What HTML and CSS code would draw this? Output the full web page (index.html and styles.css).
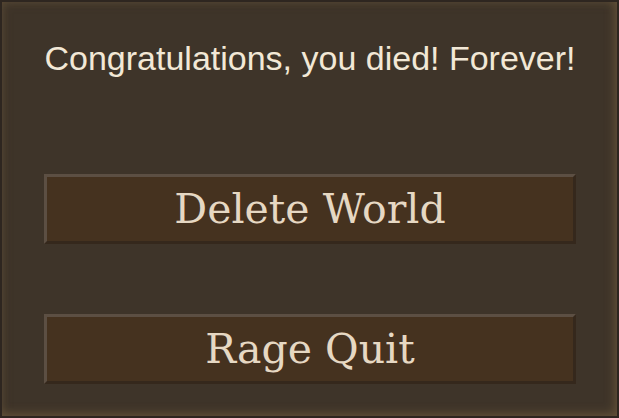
FILE: index.html
```html
<!DOCTYPE html>
<html>
<head>
<meta charset="utf-8">
<link rel="stylesheet" href="styles.css">
</head>
<body>
<div class="panel">
  <h1 class="title">Congratulations, you died! Forever!</h1>
  <div class="buttons">
    <button class="btn">Delete World</button>
    <button class="btn">Rage Quit</button>
  </div>
</div>
</body>
</html>
```
FILE: styles.css
```css
html, body {
  margin: 0;
  padding: 0;
  width: 619px;
  height: 418px;
  background: #2f2822;
  overflow: hidden;
}
.panel {
  box-sizing: border-box;
  width: 619px;
  height: 418px;
  border: 2px solid #2e2620;
  background: #3e3429;
  box-shadow: inset -3px -3px 10px rgba(120, 98, 66, 0.55), inset 2px 2px 8px rgba(100, 82, 60, 0.35);
  display: flex;
  flex-direction: column;
  align-items: center;
  padding: 0 41px 0 42px;
}
.title {
  margin: 36px 0 0;
  font-family: "Liberation Sans", Arial, sans-serif;
  font-weight: normal;
  font-size: 34px;
  line-height: 40px;
  color: #f2e8d6;
  white-space: nowrap;
}
.buttons {
  display: flex;
  flex-direction: column;
  gap: 70px;
  margin-top: 96px;
  width: 100%;
}
.btn {
  box-sizing: border-box;
  width: 100%;
  height: 70px;
  padding: 0;
  background: #45321f;
  border-style: solid;
  border-width: 3px;
  border-color: #5c4f43 #35281c #35281c #5c4f43;
  font-family: "DejaVu Serif", serif;
  font-size: 41px;
  color: #e6d8c3;
  line-height: 60px;
}
```
